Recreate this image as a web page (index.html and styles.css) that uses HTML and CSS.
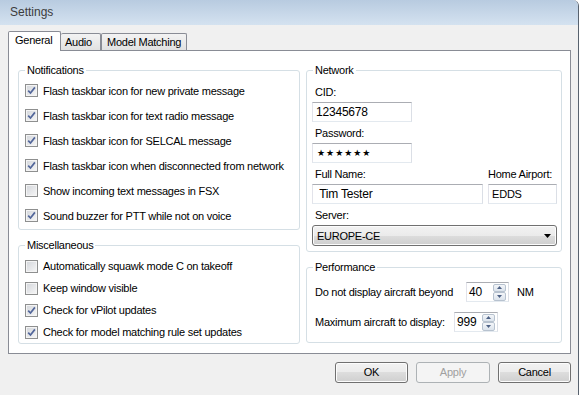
FILE: index.html
```html
<!DOCTYPE html>
<html lang="en">
<head>
    <meta charset="UTF-8">
    <title>Settings</title>
    <link rel="stylesheet" href="styles.css">
</head>
<body>
    <div class="window">
        <div class="titlebar">Settings</div>
        <div class="client">
            <div class="tabs">
                <div class="tab active">General</div>
                <div class="tab audio">Audio</div>
                <div class="tab mm">Model Matching</div>
            </div>
            <div class="panel">
                <div class="col">
                    <fieldset class="group notif">
                        <legend>Notifications</legend>
                        <div class="check"><span class="box"><svg viewBox="0 0 11 11"><path d="M2.2 5.6l2.3 2.4 4.4-5.6"/></svg></span>Flash taskbar icon for new private message</div>
                        <div class="check"><span class="box"><svg viewBox="0 0 11 11"><path d="M2.2 5.6l2.3 2.4 4.4-5.6"/></svg></span>Flash taskbar icon for text radio message</div>
                        <div class="check"><span class="box"><svg viewBox="0 0 11 11"><path d="M2.2 5.6l2.3 2.4 4.4-5.6"/></svg></span>Flash taskbar icon for SELCAL message</div>
                        <div class="check"><span class="box"><svg viewBox="0 0 11 11"><path d="M2.2 5.6l2.3 2.4 4.4-5.6"/></svg></span>Flash taskbar icon when disconnected from network</div>
                        <div class="check"><span class="box"></span>Show incoming text messages in FSX</div>
                        <div class="check"><span class="box"><svg viewBox="0 0 11 11"><path d="M2.2 5.6l2.3 2.4 4.4-5.6"/></svg></span>Sound buzzer for PTT while not on voice</div>
                    </fieldset>
                    <fieldset class="group misc">
                        <legend>Miscellaneous</legend>
                        <div class="check"><span class="box"></span>Automatically squawk mode C on takeoff</div>
                        <div class="check"><span class="box"></span>Keep window visible</div>
                        <div class="check"><span class="box"><svg viewBox="0 0 11 11"><path d="M2.2 5.6l2.3 2.4 4.4-5.6"/></svg></span>Check for vPilot updates</div>
                        <div class="check"><span class="box"><svg viewBox="0 0 11 11"><path d="M2.2 5.6l2.3 2.4 4.4-5.6"/></svg></span>Check for model matching rule set updates</div>
                    </fieldset>
                </div>
                <div class="col">
                    <fieldset class="group network">
                        <legend>Network</legend>
                        <div class="net-label first">CID:</div>
                        <div class="textbox short">12345678</div>
                        <div class="net-label">Password:</div>
                        <div class="textbox short stars">★★★★★★</div>
                        <div class="name-row">
                            <div class="name-col">
                                <div class="net-label">Full Name:</div>
                                <div class="textbox fullname">&nbsp;Tim Tester</div>
                            </div>
                            <div class="name-col">
                                <div class="net-label airport">Home Airport:</div>
                                <div class="textbox airport-box">EDDS</div>
                            </div>
                        </div>
                        <div class="net-label">Server:</div>
                        <div class="combo">
                            <span>EUROPE-CE</span>
                            <svg class="arrow" viewBox="0 0 7 4"><path d="M0 0h7L3.5 4z"/></svg>
                        </div>
                    </fieldset>
                    <fieldset class="group perf">
                        <legend>Performance</legend>
                        <div class="perf-row">
                            <span class="perf-label range">Do not display aircraft beyond</span>
                            <div class="spinbox range-box">
                                <span class="spin-value">40</span>
                                <div class="spin">
                                    <div class="spin-btn"><svg viewBox="0 0 5 3"><path d="M0 3L2.5 0 5 3z"/></svg></div>
                                    <div class="spin-btn"><svg viewBox="0 0 5 3"><path d="M0 0h5L2.5 3z"/></svg></div>
                                </div>
                            </div>
                            <span class="unit">NM</span>
                        </div>
                        <div class="perf-row">
                            <span class="perf-label max">Maximum aircraft to display:</span>
                            <div class="spinbox max-box">
                                <span class="spin-value">999</span>
                                <div class="spin">
                                    <div class="spin-btn"><svg viewBox="0 0 5 3"><path d="M0 3L2.5 0 5 3z"/></svg></div>
                                    <div class="spin-btn"><svg viewBox="0 0 5 3"><path d="M0 0h5L2.5 3z"/></svg></div>
                                </div>
                            </div>
                        </div>
                    </fieldset>
                </div>
            </div>
            <div class="buttons">
                <div class="btn">OK</div>
                <div class="btn disabled">Apply</div>
                <div class="btn">Cancel</div>
            </div>
        </div>
    </div>
</body>
</html>
```

FILE: styles.css
```css
body {
    margin: 0;
    background: #fff;
    font-family: "Liberation Sans", Arial, sans-serif;
    font-size: 11px;
    letter-spacing: -0.25px;
    color: #000;
}

.window {
    width: 579px;
    height: 395px;
    box-sizing: border-box;
    background: #f0f0f0;
    border-right: 1px solid #58626e;
    border-top-right-radius: 6px;
    overflow: hidden;
}

.titlebar {
    height: 25px;
    line-height: 25px;
    padding-left: 10px;
    font-size: 12px;
    letter-spacing: 0;
    color: #3c3c3c;
    background: linear-gradient(#b8cbe0, #d4e2f0);
}

.client {
    padding: 6px 7px 0 8px;
}

/* tab strip */
.tabs {
    display: flex;
    align-items: flex-end;
    height: 19px;
}

.tab {
    box-sizing: border-box;
    height: 17px;
    line-height: 16px;
    border: 1px solid #898c95;
    border-bottom: none;
    border-radius: 2px 2px 0 0;
    background: linear-gradient(#f3f3f3, #e1e1e1);
    padding-left: 5px;
}

.tab.active {
    position: relative;
    z-index: 1;
    width: 53px;
    height: 20px;
    margin-bottom: -1px;
    padding-left: 6px;
    background: #fff;
}

.tab.audio {
    width: 40px;
    border-left: none;
    padding-left: 4px;
}

.tab.mm {
    width: 86px;
}

.panel {
    box-sizing: border-box;
    width: 563px;
    height: 304px;
    background: #fff;
    border: 1px solid #898c95;
    padding: 13px 8px 0 9px;
    display: grid;
    grid-template-columns: 282px 256px;
    column-gap: 6px;
    align-items: start;
}

/* group boxes */
.group {
    margin: 0;
    padding: 0 0 0 6px;
    border: 1px solid #d5dfe5;
    border-radius: 3px;
    min-width: 0;
}

.group legend {
    padding: 0 2px;
    line-height: 13px;
}

.notif {
    padding-top: 1px;
    padding-bottom: 1px;
}

.notif .check {
    height: 25px;
}

.misc {
    margin-top: 9px;
    padding-top: 3px;
    padding-bottom: 0;
}

.misc .check {
    height: 22px;
}

.check {
    display: flex;
    align-items: center;
    white-space: nowrap;
}

.box {
    box-sizing: border-box;
    width: 13px;
    height: 13px;
    margin-right: 5px;
    border: 1px solid #8e8f8f;
    background: linear-gradient(135deg, #d2d5da, #f7f7f7);
    box-shadow: inset 0 0 0 1px #f4f4f4;
    display: flex;
    flex-shrink: 0;
}

.box svg {
    width: 11px;
    height: 11px;
    fill: none;
    stroke: #52669a;
    stroke-width: 1.7;
}

/* network */
.network {
    padding: 0 4px 5px 5px;
}

.network legend,
.perf legend {
    margin-left: 1px;
}

.net-label {
    height: 13px;
    line-height: 13px;
    padding-left: 3px;
    margin-bottom: 3px;
}

.net-label.first {
    margin-top: 9px;
}

.net-label.airport {
    padding-left: 0;
}

.textbox {
    box-sizing: border-box;
    height: 20px;
    line-height: 18px;
    border: 1px solid;
    border-color: #abadb3 #dbdfe6 #e3e9ef #e2e3ea;
    background: #fff;
    font-size: 12px;
    letter-spacing: -0.2px;
    padding-left: 3px;
    margin-bottom: 5px;
    white-space: nowrap;
}

.textbox.short {
    width: 100px;
}

.textbox.stars {
    font-family: "DejaVu Sans", sans-serif;
    font-size: 9px;
    letter-spacing: 1px;
    padding-left: 4px;
}

.name-row {
    display: flex;
    gap: 5px;
}

.textbox.fullname {
    width: 171px;
}

.textbox.airport-box {
    width: 69px;
    font-size: 11px;
}

.combo {
    box-sizing: border-box;
    width: 245px;
    height: 21px;
    border: 1px solid #707070;
    border-radius: 3px;
    background: linear-gradient(#f2f2f2 0%, #ebebeb 50%, #dddddd 50%, #cfcfcf 100%);
    box-shadow: inset 0 0 0 1px #fcfcfc;
    display: flex;
    align-items: center;
    justify-content: space-between;
    padding: 0 5px 0 4px;
}

.combo .arrow {
    width: 7px;
    height: 4px;
    fill: #000;
}

/* performance */
.perf {
    margin-top: 9px;
    padding: 8px 4px 10px 5px;
}

.perf-row {
    display: flex;
    align-items: center;
    height: 20px;
}

.perf-row + .perf-row {
    margin-top: 10px;
}

.perf-label {
    box-sizing: border-box;
    padding-left: 3px;
    white-space: nowrap;
}

.perf-label.range {
    width: 154px;
}

.perf-label.max {
    width: 142px;
}

.spinbox {
    box-sizing: border-box;
    height: 20px;
    border: 1px solid;
    border-color: #abadb3 #dbdfe6 #e3e9ef #e2e3ea;
    background: #fff;
    display: flex;
    align-items: center;
    font-size: 12px;
    letter-spacing: -0.2px;
}

.spinbox.range-box {
    width: 43px;
}

.spinbox.max-box {
    width: 44px;
}

.spin-value {
    padding-left: 2px;
}

.spin {
    display: flex;
    flex-direction: column;
    width: 13px;
    height: 17px;
    margin-left: auto;
    margin-right: 2px;
}

.spin-btn {
    flex: 1;
    box-sizing: border-box;
    border: 1px solid #b7c2cf;
    border-radius: 2px;
    background: linear-gradient(#f4f6f9, #dbe3ec);
    display: flex;
    align-items: center;
    justify-content: center;
}

.spin-btn svg {
    width: 5px;
    height: 3px;
    fill: #4d6185;
}

.unit {
    margin-left: 8px;
}

/* dialog buttons */
.buttons {
    display: flex;
    justify-content: flex-end;
    gap: 8px;
    margin-top: 8px;
}

.btn {
    box-sizing: border-box;
    width: 73px;
    height: 21px;
    line-height: 19px;
    text-align: center;
    border: 1px solid #707070;
    border-radius: 3px;
    background: linear-gradient(#f2f2f2 0%, #ebebeb 50%, #dddddd 50%, #cfcfcf 100%);
    box-shadow: inset 0 0 0 1px #fcfcfc;
}

.btn.disabled {
    width: 74px;
    color: #a0a0a0;
    border-color: #adb2b5;
    background: #f4f4f4;
    box-shadow: none;
}
```
